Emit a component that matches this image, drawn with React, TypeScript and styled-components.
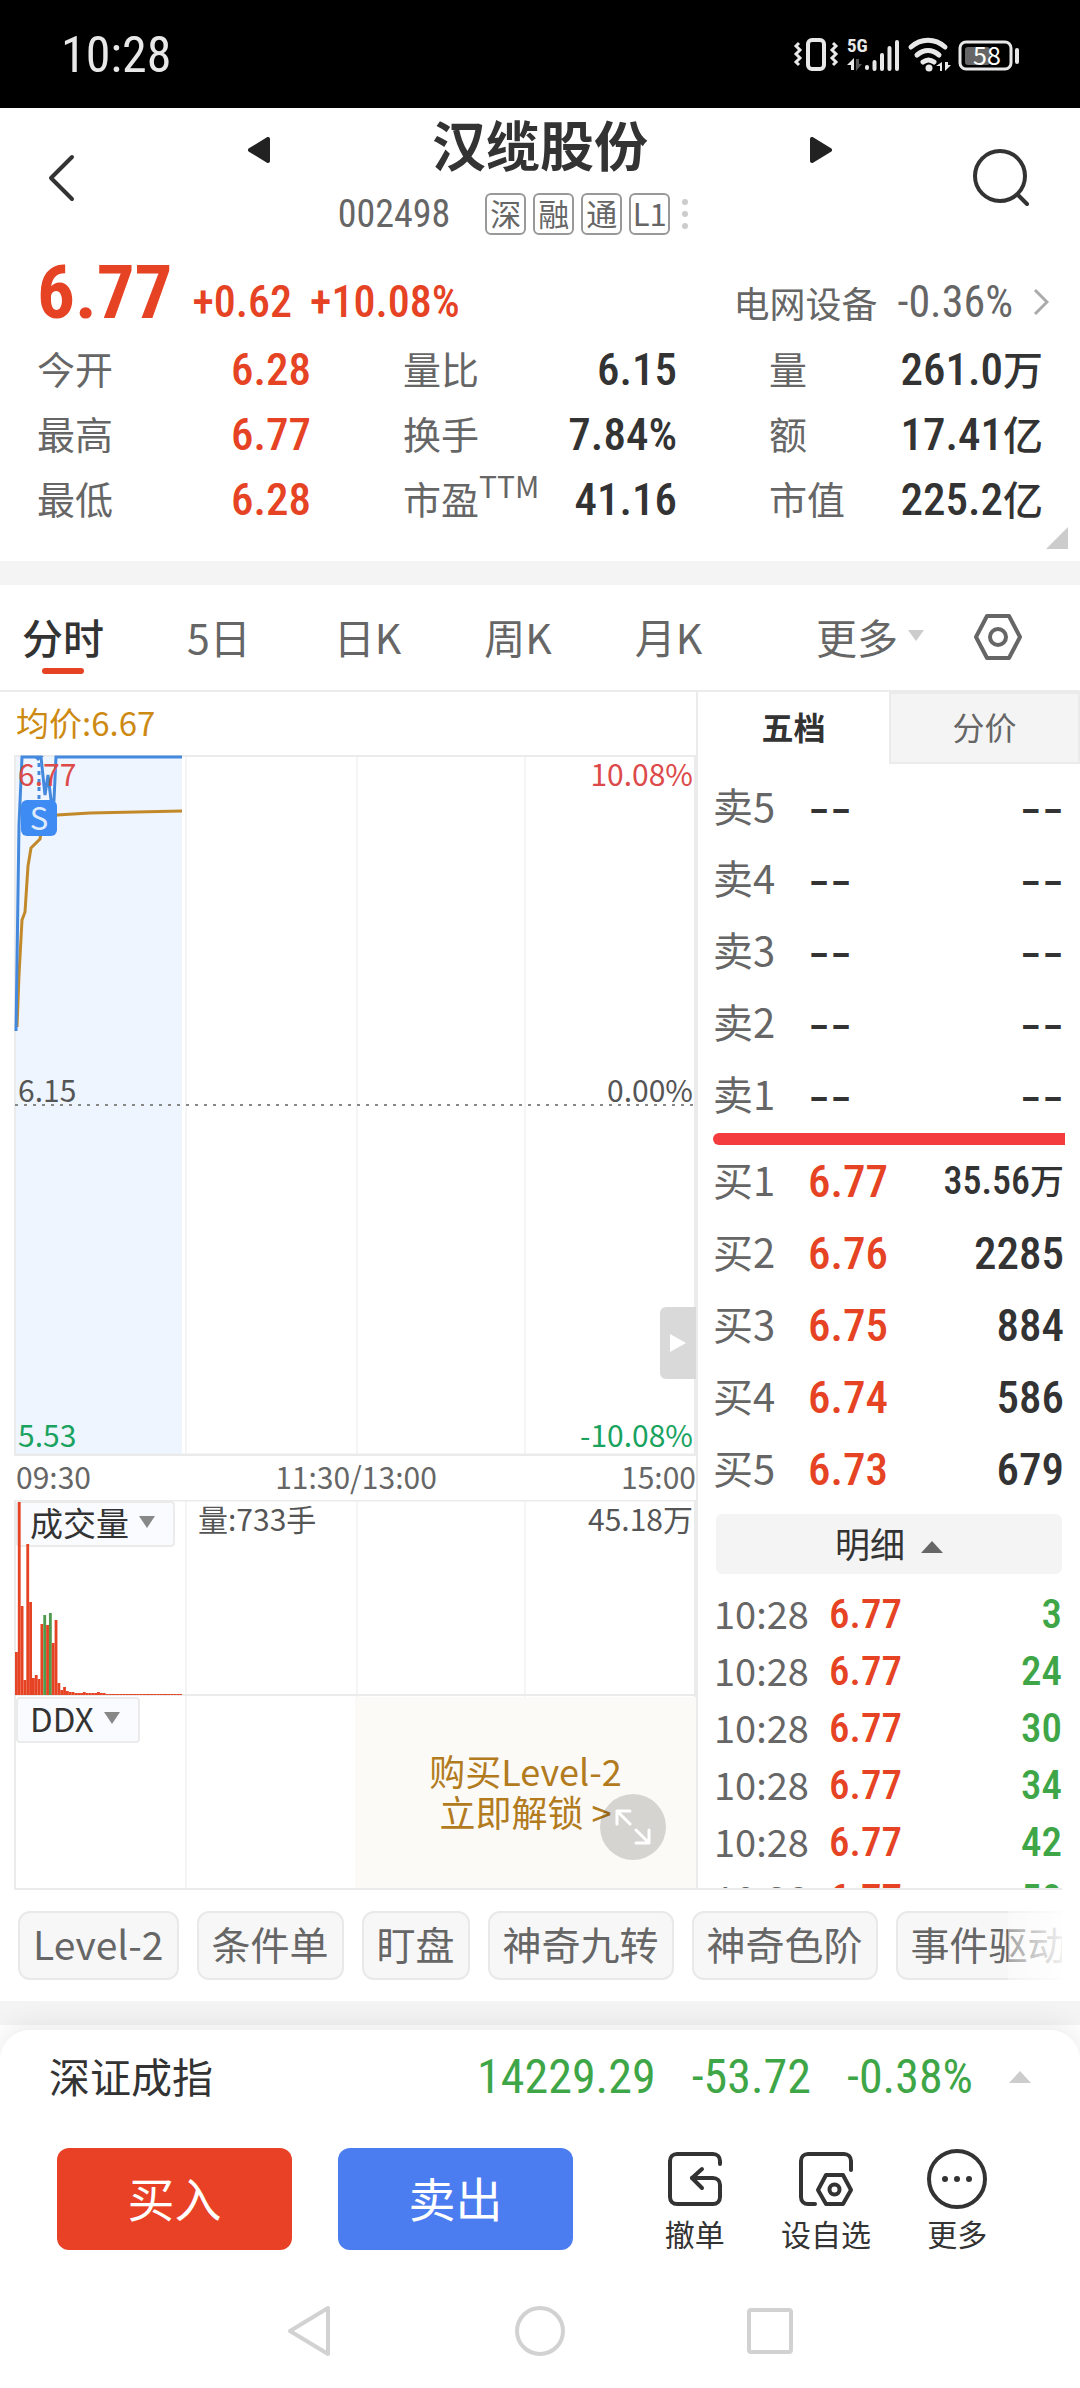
import React from 'react';
import styled, { createGlobalStyle, css } from 'styled-components';

const RED = '#e54324';
const GREEN = '#3fa648';
const INK = '#333333';
const MUTED = '#666666';
const LINE = '#ebebeb';
const NUM = '"Liberation Sans Narrow", "Roboto Condensed", Roboto, "Noto Sans CJK SC", sans-serif';

const GlobalStyle = createGlobalStyle`
  * { box-sizing: border-box; }
  body {
    margin: 0;
    background: #ffffff;
    color: ${INK};
    font-family: "Noto Sans CJK SC", sans-serif;
    font-size: 38px;
    line-height: 1;
  }
  button {
    margin: 0;
    padding: 0;
    border: 0;
    background: none;
    color: inherit;
    font: inherit;
    cursor: pointer;
  }
  svg { display: block; flex: none; }
  h1, dl, dd, dt, p { margin: 0; font: inherit; }
  table { border-collapse: collapse; border-spacing: 0; }
  th, td { padding: 0; font: inherit; }
  a { color: inherit; text-decoration: none; }
`;

/* ---------- status bar ---------- */

const StatusBar = styled.div`
  display: flex;
  align-items: center;
  justify-content: space-between;
  height: 108px;
  padding: 0 60px 0 61px;
  background: #000000;
  color: #e8e8e8;
`;

const Clock = styled.time`
  padding-top: 2px;
  font-family: ${NUM};
  font-size: 50px;
  line-height: 50px;
`;

/* ---------- header ---------- */

const Header = styled.header`
  display: grid;
  grid-template-columns: 200px 1fr 200px;
  align-items: center;
  height: 140px;
`;

const HeaderButton = styled.button<{ $end?: boolean }>`
  display: flex;
  justify-content: ${p => (p.$end ? 'flex-end' : 'flex-start')};
  padding: ${p => (p.$end ? '0 49px 0 0' : '0 0 0 46px')};
`;

const TitleBlock = styled.div`
  display: flex;
  flex-direction: column;
  align-self: start;
  gap: 10px;
  padding-top: 9px;
`;

const TitleRow = styled.div`
  display: flex;
  align-items: center;
  justify-content: space-between;
  padding: 0 48px;
`;

const Title = styled.h1`
  padding-bottom: 12px;
  font-size: 54px;
  line-height: 54px;
  font-weight: 700;
`;

const CodeRow = styled.div`
  display: flex;
  align-items: center;
  justify-content: center;
  gap: 7px;
  padding-right: 54px;
  color: ${MUTED};
`;

const Code = styled.span`
  margin-right: 28px;
  font-family: ${NUM};
  font-size: 38px;
`;

const Tag = styled.span`
  display: flex;
  align-items: center;
  justify-content: center;
  width: 41px;
  height: 42px;
  padding-bottom: 3px;
  border: 2px solid #999999;
  border-radius: 6px;
  font-size: 31px;
`;

/* ---------- quote ---------- */

const Quote = styled.section`
  position: relative;
  height: 313px;
  padding: 4px 37px 0;
`;

const PriceRow = styled.div`
  display: flex;
  align-items: flex-end;
  height: 82px;
`;

const Price = styled.span`
  margin-right: 20px;
  color: ${RED};
  font-family: ${NUM};
  font-size: 75px;
  font-weight: 700;
  line-height: 84px;
`;

const Change = styled.span`
  margin-right: 18px;
  color: ${RED};
  font-family: ${NUM};
  font-size: 44px;
  font-weight: 500;
  line-height: 64px;
`;

const Sector = styled.a`
  display: flex;
  align-items: center;
  gap: 20px;
  margin-right: -6px;
  margin-left: auto;
  color: ${MUTED};
  font-size: 36px;
  line-height: 64px;
`;

const SectorMove = styled.span`
  font-family: ${NUM};
  font-size: 44px;
`;

const Stats = styled.dl`
  display: grid;
  grid-template-columns: repeat(3, 274px);
  justify-content: space-between;
  padding-top: 3px;
`;

const Stat = styled.div`
  display: flex;
  align-items: center;
  justify-content: space-between;
  height: 65px;
`;

const StatLabel = styled.dt`
  padding-bottom: 4px;
  color: ${MUTED};
  white-space: nowrap;

  sup {
    font-size: 30px;
    line-height: 0;
    vertical-align: 16px;
  }
`;

const StatValue = styled.dd<{ $up?: boolean }>`
  color: ${p => (p.$up ? RED : INK)};
  font-family: ${NUM};
  font-size: 45px;
  font-weight: 500;
  white-space: nowrap;
`;

const Unit = styled.span<{ $small?: boolean }>`
  font-size: ${p => (p.$small ? 34 : 40)}px;
`;

const Corner = styled.svg`
  position: absolute;
  right: 12px;
  bottom: 12px;
`;

const Band = styled.div`
  height: 24px;
  background: #f4f4f4;
`;

/* ---------- period tabs ---------- */

const Periods = styled.nav`
  display: flex;
  align-items: center;
  height: 107px;
  padding: 0 58px 4px 22px;
  border-bottom: 2px solid ${LINE};
  color: ${MUTED};
  font-size: 41px;
`;

const PeriodList = styled.div`
  display: flex;
  gap: 83px;
`;

const Period = styled.button<{ $active?: boolean }>`
  position: relative;
  line-height: 80px;
  ${p =>
    p.$active &&
    css`
      color: ${INK};
      font-weight: 500;
      &::after {
        content: '';
        position: absolute;
        left: 20px;
        right: 20px;
        bottom: 2px;
        height: 6px;
        border-radius: 3px;
        background: ${RED};
      }
    `}
`;

const MorePeriods = styled.button`
  display: flex;
  align-items: center;
  gap: 10px;
  margin-left: auto;
  margin-right: 50px;
  line-height: 80px;
`;

const SettingsButton = styled.button`
  padding-top: 2px;
`;

/* ---------- market area ---------- */

const Market = styled.main`
  display: grid;
  grid-template-columns: 696fr 384fr;
`;

const Charts = styled.section`
  position: relative;
  padding-left: 14px;
`;

const Average = styled.p`
  padding: 0 2px 2px;
  color: #cd8a13;
  font-size: 33px;
  line-height: 61px;
`;

const Plot = styled.div<{ $height: number }>`
  position: relative;
  height: ${p => p.$height}px;

  > svg {
    position: relative;
    width: 100%;
    height: 100%;
    pointer-events: none;
  }
`;

const PlotLabel = styled.span<{ $top: number; $end?: boolean; $color?: string }>`
  position: absolute;
  top: ${p => p.$top}px;
  ${p => (p.$end ? 'right: 3px;' : 'left: 4px;')}
  color: ${p => p.$color || '#555555'};
  font-size: 30px;
  line-height: 36px;
`;

const SellMark = styled.span`
  position: absolute;
  left: 7px;
  top: 45px;
  width: 36px;
  height: 36px;
  border-radius: 6px;
  background: #3d8bf3;
  color: #dfeafc;
  font-size: 31px;
  line-height: 34px;
  text-align: center;
`;

const Axis = styled.div`
  display: grid;
  grid-template-columns: 1fr auto 1fr;
  padding: 0 0 3px 2px;
  color: ${MUTED};
  font-size: 30px;
  line-height: 41px;

  span:last-child { text-align: right; }
`;

const Picker = styled.button`
  position: absolute;
  left: 2px;
  top: 1px;
  display: flex;
  align-items: center;
  gap: 10px;
  height: 46px;
  padding: 0 18px 4px 12px;
  border: 2px solid ${LINE};
  border-radius: 4px;
  background: #fafbff;
  font-size: 33px;
  line-height: 38px;
`;

const VolumeNow = styled.span`
  position: absolute;
  left: 184px;
  top: 0;
  color: #555555;
  font-size: 30px;
  line-height: 36px;
`;

const Unlock = styled.a`
  position: absolute;
  left: 50%;
  right: 0;
  top: 1px;
  bottom: 2px;
  display: flex;
  flex-direction: column;
  align-items: center;
  justify-content: center;
  padding-bottom: 4px;
  background: #fbfaf6;
  color: #b27b1e;
  font-size: 36px;
  line-height: 41px;
`;

const Expand = styled.button`
  position: absolute;
  right: 30px;
  bottom: 30px;
  display: flex;
  align-items: center;
  justify-content: center;
  width: 66px;
  height: 66px;
  border-radius: 50%;
  background: rgba(0, 0, 0, 0.15);
`;

const Drawer = styled.button`
  position: absolute;
  right: 0;
  bottom: 77px;
  display: flex;
  align-items: center;
  justify-content: center;
  width: 36px;
  height: 72px;
  border-radius: 6px 0 0 6px;
  background: #d9d9d9;
`;

const Book = styled.section`
  display: flex;
  flex-direction: column;
  border-left: 2px solid ${LINE};
`;

const BookTabs = styled.div`
  display: grid;
  grid-template-columns: 1fr 1fr;
  height: 72px;
  margin-bottom: 7px;
  font-size: 32px;
`;

const BookTab = styled.button<{ $active?: boolean }>`
  padding-bottom: 4px;
  ${p =>
    p.$active
      ? css`
          font-weight: 700;
        `
      : css`
          border: 2px solid ${LINE};
          background: #f4f4f4;
          color: ${MUTED};
        `}
`;

const Levels = styled.table`
  width: calc(100% - 31px);
  margin: 0 16px 0 15px;
  table-layout: fixed;
`;

const Level = styled.tr`
  height: 72px;
`;

const LevelName = styled.th`
  width: 95px;
  padding-bottom: 4px;
  color: ${MUTED};
  font-size: 40px;
  text-align: left;
`;

const LevelPrice = styled.td`
  width: 90px;
  color: ${RED};
  font-family: ${NUM};
  font-size: 45px;
  font-weight: 500;
`;

const LevelSize = styled.td<{ $small?: boolean }>`
  font-family: ${NUM};
  font-size: ${p => (p.$small ? 38 : 45)}px;
  font-weight: 500;
  text-align: right;
  white-space: nowrap;
`;

const LevelEmpty = styled.td<{ $end?: boolean }>`
  width: ${p => (p.$end ? 'auto' : '90px')};
  padding-top: 3px;
  font-family: Inter, sans-serif;
  font-size: 48px;
  text-align: ${p => (p.$end ? 'right' : 'left')};
`;

const Balance = styled.div`
  height: 12px;
  margin: 2px 15px 0;
  border-radius: 6px 0 0 6px;
  background: #f43b3d;
`;

const DetailToggle = styled.button`
  display: flex;
  align-items: center;
  justify-content: center;
  gap: 16px;
  height: 60px;
  margin: 9px 18px 12px;
  padding-bottom: 4px;
  border-radius: 6px;
  background: #f4f4f4;
  font-size: 35px;

  > svg { margin-top: 10px; }
`;

const TradesClip = styled.div`
  flex-grow: 1;
  height: 0;
  margin-right: 18px;
  border-bottom: 2px solid ${LINE};
  overflow-y: clip;
`;

const Trades = styled.table`
  width: calc(100% - 16px);
  margin-left: 16px;
  table-layout: fixed;
`;

const Trade = styled.tr`
  height: 57px;
`;

const TradeTime = styled.td`
  width: 115px;
  padding-bottom: 4px;
  color: ${MUTED};
`;

const TradePrice = styled.td`
  color: ${RED};
  font-family: ${NUM};
  font-size: 41px;
  font-weight: 500;
`;

const TradeSize = styled.td`
  color: ${GREEN};
  font-family: ${NUM};
  font-size: 41px;
  font-weight: 500;
  text-align: right;
`;

/* ---------- feature chips ---------- */

const Chips = styled.div`
  position: relative;
  display: flex;
  gap: 18px;
  margin-right: 18px;
  padding: 21px 0 21px 18px;
  overflow: hidden;

  &::after {
    content: '';
    position: absolute;
    top: 0;
    right: 0;
    bottom: 0;
    width: 54px;
    background: linear-gradient(to right, rgba(255, 255, 255, 0.4), rgba(255, 255, 255, 0.9));
  }
`;

const Chip = styled.button`
  flex: none;
  height: 69px;
  padding: 0 13px 5px;
  border: 2px solid #e9e9e9;
  border-radius: 12px;
  background: #f7f7f7;
  color: ${MUTED};
  font-size: 39px;
  line-height: 60px;
`;

/* ---------- bottom sheet ---------- */

const Sheet = styled.footer`
  position: relative;
  margin-top: 5px;
  border-radius: 30px 30px 0 0;
  background: #ffffff;
  box-shadow: 0 -6px 24px rgba(0, 0, 0, 0.08);
`;

const IndexRow = styled.div`
  display: flex;
  align-items: center;
  justify-content: space-between;
  height: 96px;
  padding: 0 49px;
  font-size: 41px;
`;

const IndexName = styled.span`
  padding-bottom: 5px;
`;

const IndexFigures = styled.span`
  display: flex;
  align-items: center;
  gap: 36px;
  padding-bottom: 2px;
`;

const IndexValue = styled.span`
  color: ${GREEN};
  font-family: ${NUM};
  font-size: 48px;
`;

const Actions = styled.div`
  display: flex;
  align-items: flex-start;
  padding: 22px 57px 0;
`;

const Deal = styled.button<{ $color: string }>`
  flex: 235 1 0;
  height: 102px;
  margin-right: 46px;
  padding-bottom: 6px;
  border-radius: 12px;
  background: ${p => p.$color};
  color: #ffffff;
  font-size: 47px;
`;

const Tools = styled.div`
  display: grid;
  grid-template-columns: repeat(3, 1fr);
  flex: 394 1 0;
  padding-left: 10px;
`;

const Tool = styled.button`
  display: flex;
  flex-direction: column;
  align-items: center;
  gap: 6px;
  font-size: 30px;
  line-height: 34px;
`;

const SystemNav = styled.div`
  display: flex;
  justify-content: center;
  gap: 178px;
  padding: 54px 0 31px;
`;

/* ---------- data ---------- */

const stats = [
  { label: '今开', value: '6.28', up: true },
  { label: '量比', value: '6.15' },
  { label: '量', value: '261.0', unit: '万' },
  { label: '最高', value: '6.77', up: true },
  { label: '换手', value: '7.84%' },
  { label: '额', value: '17.41', unit: '亿' },
  { label: '最低', value: '6.28', up: true },
  { label: '市盈', sup: 'TTM', value: '41.16' },
  { label: '市值', value: '225.2', unit: '亿' },
];

const asks = ['卖5', '卖4', '卖3', '卖2', '卖1'];

const bids = [
  { name: '买1', price: '6.77', size: '35.56', unit: '万' },
  { name: '买2', price: '6.76', size: '2285' },
  { name: '买3', price: '6.75', size: '884' },
  { name: '买4', price: '6.74', size: '586' },
  { name: '买5', price: '6.73', size: '679' },
];

const trades = ['3', '24', '30', '34', '42', '50'];

const chips = ['Level-2', '条件单', '盯盘', '神奇九转', '神奇色阶', '事件驱动'];

const volumes = [
  43, 193, 89, 15, 151, 93, 17, 20, 16, 71, 80, 70, 82, 52, 75, 12, 5, 8, 4, 3, 3, 2, 2, 2, 3, 2,
  2, 2, 2, 3, 2, 2,
].concat(Array(27).fill(1));
const fallingMinutes = [10, 12];

/* ---------- drawings ---------- */

const Caret = ({ up, width = 16, height = 11, color = '#cccccc' }: { up?: boolean; width?: number; height?: number; color?: string }) => (
  <svg width={width} height={height} viewBox="0 0 16 11" preserveAspectRatio="none" fill={color}>
    <path d={up ? 'M8 0 16 11H0Z' : 'M0 0H16L8 11Z'} />
  </svg>
);

const StatusIcons = () => (
  <svg width="228" height="40" viewBox="0 0 228 40" fill="none" stroke="#e8e8e8">
    <rect x="16" y="6" width="16" height="29" rx="4" strokeWidth="4" />
    <path d="m7 10-3 3 4 4-4 4 4 4-4 4 3 3M41 10l3 3-4 4 4 4-4 4 4 4-3 3" strokeWidth="3" transform="translate(0 -1)" />
    <text x="55" y="18" fontSize="19" fontWeight="700" fill="#e8e8e8" stroke="none" fontFamily="Liberation Sans Narrow, Roboto Condensed, Roboto, sans-serif">5G</text>
    <path d="M62 36V24l-7 7h4v5Z" fill="#e8e8e8" stroke="none" />
    <path d="M64 25v12l6-7h-3v-5Z" fill="#555555" stroke="none" />
    <path d="M75 33v1M82.500 28v7M90 21v14M97.500 14v21M105 8v27" strokeWidth="4" strokeLinecap="round" />
    <path d="M119 13c10-9 24-9 34 0M125 21c7-6 15-6 22 0M131 28c4-3 7-3 11 0" strokeWidth="5" strokeLinecap="round" />
    <circle cx="137" cy="34" r="3.500" fill="#e8e8e8" stroke="none" />
    <path d="M150 28v9h-2v-5h-4ZM153 28v9l6-6h-3v-3Z" fill="#e8e8e8" stroke="none" />
    <rect x="168" y="8" width="51" height="27" rx="6" strokeWidth="3" />
    <rect x="173" y="13" width="25" height="18" rx="3" fill="#666666" stroke="none" />
    <text x="181" y="31" fontSize="25" fill="#ffffff" stroke="none" fontFamily="Noto Sans CJK SC, sans-serif">58</text>
    <path d="M225 16v12" strokeWidth="4" strokeLinecap="round" />
  </svg>
);

const BackIcon = () => (
  <svg width="30" height="48" viewBox="0 0 30 48" fill="none" stroke={INK} strokeWidth="4" strokeLinecap="round" strokeLinejoin="round">
    <path d="M26 3 5 24l21 21" />
  </svg>
);

const SearchIcon = () => (
  <svg width="60" height="60" viewBox="0 0 60 60" fill="none" stroke={INK} strokeWidth="4" strokeLinecap="round">
    <circle cx="29" cy="28" r="25" />
    <path d="m47 47 9 9" />
  </svg>
);

const StepIcon = ({ back }: { back?: boolean }) => (
  <svg width="22" height="26" viewBox="0 0 22 26" fill="#222222" stroke="#222222" strokeWidth="4" strokeLinejoin="round">
    <path d={back ? 'M20 2v22L2 13Z' : 'M2 2v22l18-11Z'} />
  </svg>
);

const DotsIcon = () => (
  <svg width="11" height="32" viewBox="0 0 11 32" fill="#cccccc">
    <circle cx="8" cy="4" r="3" />
    <circle cx="8" cy="16" r="3" />
    <circle cx="8" cy="28" r="3" />
  </svg>
);

const HexIcon = () => (
  <svg width="48" height="48" viewBox="0 0 48 48" fill="none" stroke={MUTED} strokeWidth="4" strokeLinejoin="round">
    <path d="M13 3h22l11 21-11 21H13L2 24Z" />
    <circle cx="24" cy="24" r="8" />
  </svg>
);

const CancelIcon = () => (
  <svg width="62" height="62" viewBox="0 0 62 62" fill="none" stroke={INK} strokeWidth="4" strokeLinecap="round" strokeLinejoin="round">
    <path d="M56 16v-3c0-4-3-7-7-7H13c-4 0-7 3-7 7v36c0 4 3 7 7 7h36c4 0 7-3 7-7V37c0-4-3-7-7-7H28" />
    <path d="M38 21 28 30l10 10" />
  </svg>
);

const WatchIcon = () => (
  <svg width="62" height="62" viewBox="0 0 62 62" fill="none" stroke={INK} strokeWidth="4" strokeLinecap="round" strokeLinejoin="round">
    <path d="M20 56h-7c-4 0-7-3-7-7V13c0-4 3-7 7-7h36c4 0 7 3 7 7v9" />
    <path d="M31 27h17l8 15-8 14H31l-8-14Z" />
    <circle cx="39.500" cy="41.500" r="5" />
  </svg>
);

const MoreIcon = () => (
  <svg width="62" height="62" viewBox="0 0 62 62" fill="none" stroke={INK} strokeWidth="4">
    <circle cx="31" cy="31" r="28" />
    <g fill={INK} stroke="none">
      <circle cx="19" cy="31" r="3" />
      <circle cx="31" cy="31" r="3" />
      <circle cx="43" cy="31" r="3" />
    </g>
  </svg>
);

const gridLines = 'M172 0V2000M343 0V2000M511 0V2000';

const PriceChart = () => (
  <svg viewBox="0 0 682 701" preserveAspectRatio="none" fill="none">
    <rect x="2" y="1" width="166" height="698" fill="#eef5fe" />
    <path d={gridLines} stroke={LINE} />
    <path d="M1 0V700M0 1H682M681 0V700" stroke={LINE} strokeWidth="2" />
    <path d="M0 700H682" stroke={LINE} strokeWidth="3" />
    <path d="M1 350H682" stroke="#888888" strokeWidth="2" strokeDasharray="3 6" />
    <path d="M3 272 5 220l3-55 3-8 3-46 3-18 9-9 2-12 15-12 33-2 92-2" stroke="#c2892a" strokeWidth="3" />
    <path d="M2 276 5 70 8 2H27l4 38 3-20 3 25h3L42 2H168" stroke="#4489dd" strokeWidth="3" />
    <path d="M19 1h11l-6 5Z" fill="#4489dd" />
    <path d="M25 8V46" stroke="#4489dd" strokeWidth="3" strokeDasharray="4 4" />
  </svg>
);

const VolumeChart = () => (
  <svg viewBox="0 0 682 196" preserveAspectRatio="none" fill="none">
    <path d={gridLines} stroke={LINE} />
    <path d="M1 0V196M681 0V196" stroke={LINE} strokeWidth="2" />
    <path d="M0 0H682" stroke={LINE} strokeWidth="3" />
    <path d="M0 195H682" stroke={LINE} strokeWidth="2" />
    {volumes.map((v, i) => (
      <rect key={i} x={1 + i * 2.83} y={195 - v} width="2.83" height={v} fill={fallingMinutes.includes(i) ? '#4f9a4c' : RED} />
    ))}
  </svg>
);

const FlowChart = () => (
  <svg viewBox="0 0 682 194" preserveAspectRatio="none" fill="none">
    <path d={gridLines} stroke={LINE} />
    <path d="M1 0V194M681 0V194M0 193H682" stroke={LINE} strokeWidth="2" />
  </svg>
);

/* ---------- page ---------- */

export default function App() {
  return (
    <>
      <GlobalStyle />
      <StatusBar>
        <Clock>10:28</Clock>
        <StatusIcons />
      </StatusBar>

      <Header>
        <HeaderButton aria-label="返回"><BackIcon /></HeaderButton>
        <TitleBlock>
          <TitleRow>
            <button aria-label="上一只"><StepIcon back /></button>
            <Title>汉缆股份</Title>
            <button aria-label="下一只"><StepIcon /></button>
          </TitleRow>
          <CodeRow>
            <Code>002498</Code>
            <Tag>深</Tag>
            <Tag>融</Tag>
            <Tag>通</Tag>
            <Tag>L1</Tag>
            <DotsIcon />
          </CodeRow>
        </TitleBlock>
        <HeaderButton $end aria-label="搜索"><SearchIcon /></HeaderButton>
      </Header>

      <Quote>
        <PriceRow>
          <Price>6.77</Price>
          <Change>+0.62</Change>
          <Change>+10.08%</Change>
          <Sector href="#sector">
            电网设备
            <SectorMove>-0.36%</SectorMove>
            <svg width="16" height="28" viewBox="0 0 16 28" fill="none" stroke="#aaaaaa" strokeWidth="3">
              <path d="m2 2 12 12L2 26" />
            </svg>
          </Sector>
        </PriceRow>
        <Stats>
          {stats.map(s => (
            <Stat key={s.label}>
              <StatLabel>{s.label}{s.sup && <sup>{s.sup}</sup>}</StatLabel>
              <StatValue $up={s.up}>{s.value}{s.unit && <Unit>{s.unit}</Unit>}</StatValue>
            </Stat>
          ))}
        </Stats>
        <Corner width="22" height="22" viewBox="0 0 22 22" fill="#cccccc"><path d="M22 0V22H0Z" /></Corner>
      </Quote>
      <Band />

      <Periods>
        <PeriodList>
          <Period $active>分时</Period>
          <Period>5日</Period>
          <Period>日K</Period>
          <Period>周K</Period>
          <Period>月K</Period>
        </PeriodList>
        <MorePeriods>更多<Caret /></MorePeriods>
        <SettingsButton aria-label="图表设置"><HexIcon /></SettingsButton>
      </Periods>

      <Market>
        <Charts>
          <Average>均价:6.67</Average>
          <Plot $height={701}>
            <PriceChart />
            <PlotLabel $top={0} $color="#dd4a4a">6.77</PlotLabel>
            <PlotLabel $top={0} $end $color="#dd4a4a">10.08%</PlotLabel>
            <PlotLabel $top={316}>6.15</PlotLabel>
            <PlotLabel $top={316} $end>0.00%</PlotLabel>
            <PlotLabel $top={661} $color="#1aa35f">5.53</PlotLabel>
            <PlotLabel $top={661} $end $color="#1aa35f">-10.08%</PlotLabel>
            <SellMark>S</SellMark>
            <Drawer aria-label="展开"><svg width="18" height="20" viewBox="0 0 18 20" fill="#ffffff"><path d="M1 1v18l16-9Z" /></svg></Drawer>
          </Plot>
          <Axis><span>09:30</span><span>11:30/13:00</span><span>15:00</span></Axis>
          <Plot $height={196}>
            <Picker>成交量<Caret color="#888888" height={12} /></Picker>
            <VolumeChart />
            <VolumeNow>量:733手</VolumeNow>
            <PlotLabel $top={0} $end>45.18万</PlotLabel>
          </Plot>
          <Plot $height={194}>
            <FlowChart />
            <Picker>DDX<Caret color="#888888" height={12} /></Picker>
            <Unlock href="#level2"><span>购买Level-2</span><span>立即解锁 &gt;</span></Unlock>
            <Expand aria-label="全屏">
              <svg width="36" height="36" viewBox="0 0 36 36" fill="none" stroke="#ffffff" strokeWidth="3" strokeLinecap="round" strokeLinejoin="round">
                <path d="M2 15V2h13M2 2l13 13M34 21v13H21M34 34 21 21" />
              </svg>
            </Expand>
          </Plot>
        </Charts>

        <Book>
          <BookTabs>
            <BookTab $active>五档</BookTab>
            <BookTab>分价</BookTab>
          </BookTabs>
          <Levels>
            <tbody>
              {asks.map(name => (
                <Level key={name}>
                  <LevelName scope="row">{name}</LevelName>
                  <LevelEmpty>--</LevelEmpty>
                  <LevelEmpty $end>--</LevelEmpty>
                </Level>
              ))}
            </tbody>
          </Levels>
          <Balance />
          <Levels>
            <tbody>
              {bids.map(b => (
                <Level key={b.name}>
                  <LevelName scope="row">{b.name}</LevelName>
                  <LevelPrice>{b.price}</LevelPrice>
                  <LevelSize $small={!!b.unit}>{b.size}{b.unit && <Unit $small>{b.unit}</Unit>}</LevelSize>
                </Level>
              ))}
            </tbody>
          </Levels>
          <DetailToggle>明细<Caret up width={22} height={12} color={MUTED} /></DetailToggle>
          <TradesClip>
            <Trades>
              <tbody>
                {trades.map(size => (
                  <Trade key={size}>
                    <TradeTime>10:28</TradeTime>
                    <TradePrice>6.77</TradePrice>
                    <TradeSize>{size}</TradeSize>
                  </Trade>
                ))}
              </tbody>
            </Trades>
          </TradesClip>
        </Book>
      </Market>

      <Chips>
        {chips.map(c => <Chip key={c}>{c}</Chip>)}
      </Chips>
      <Band />

      <Sheet>
        <IndexRow>
          <IndexName>深证成指</IndexName>
          <IndexFigures>
            <IndexValue>14229.29</IndexValue>
            <IndexValue>-53.72</IndexValue>
            <IndexValue>-0.38%</IndexValue>
            <Caret up width={22} height={12} />
          </IndexFigures>
        </IndexRow>
        <Actions>
          <Deal $color="#e84125">买入</Deal>
          <Deal $color="#4c7df0">卖出</Deal>
          <Tools>
            <Tool><CancelIcon />撤单</Tool>
            <Tool><WatchIcon />设自选</Tool>
            <Tool><MoreIcon />更多</Tool>
          </Tools>
        </Actions>
        <SystemNav>
          <svg width="50" height="54" viewBox="0 0 50 54" fill="none" stroke="#d2d2d2" strokeWidth="4" strokeLinejoin="round"><path d="M43 4v46L5 27Z" /></svg>
          <svg width="54" height="54" viewBox="0 0 54 54" fill="none" stroke="#d2d2d2" strokeWidth="4"><circle cx="27" cy="27" r="23" /></svg>
          <svg width="50" height="54" viewBox="0 0 50 54" fill="none" stroke="#d2d2d2" strokeWidth="4"><rect x="4" y="6" width="42" height="42" rx="2" /></svg>
        </SystemNav>
      </Sheet>
    </>
  );
}
